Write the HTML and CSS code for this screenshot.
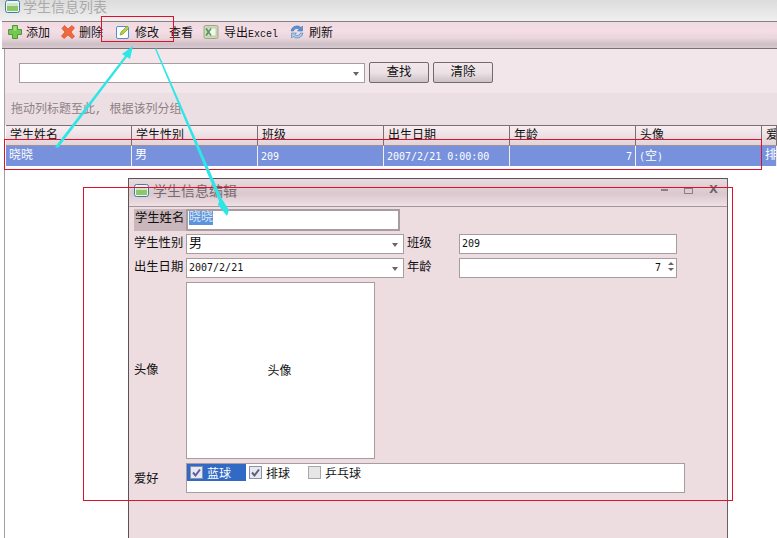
FILE: index.html
```html
<!DOCTYPE html>
<html lang="zh-CN">
<head>
  <meta charset="UTF-8" />
  <title>学生信息列表</title>
  <link rel="stylesheet" href="styles.css">
</head>
<body>
<div class="page">
  <div class="main-title">
    <svg class="win-icon" width="15" height="13" viewBox="0 0 15 13"><rect x="0.5" y="0.5" width="14" height="12" rx="2" fill="#eef3f8" stroke="#3d7f9c"/><rect x="2" y="3" width="11" height="8" fill="#8cc86a"/><rect x="2" y="3" width="11" height="3" fill="#cfe6c0"/></svg>
    <span>学生信息列表</span>
  </div>

  <div class="toolbar">
    <div class="tool">
      <svg width="16" height="16" viewBox="0 0 16 16"><path d="M5.500 1.500h5v4h4v5h-4v4h-5v-4h-4v-5h4z" fill="#74c850" stroke="#4c9a34"/><path d="M6.500 6.500v-4h3v4" fill="#a4e07f"/></svg>
      <span>添加</span>
    </div>
    <div class="tool">
      <svg width="16" height="16" viewBox="0 0 16 16"><path d="M2 4.500l2.500-3L8 5l4-3.500 2.500 2.500L11 8l3.500 4.500-2.500 2L8 11l-4 3.500-2.500-2.500L5 8z" fill="#ee6a3c" stroke="#d8492a" stroke-width=".7"/></svg>
      <span>删除</span>
    </div>
    <div class="tool tool-edit">
      <svg width="16" height="16" viewBox="0 0 16 16"><rect x="1.500" y="2.500" width="12" height="12" rx="1.500" fill="#fff" stroke="#4d8fd0"/><path d="M5 11l1-3 6-6 2 2-6 6z" fill="#b8cf4a" stroke="#7d9a30" stroke-width=".7"/></svg>
      <span>修改</span>
    </div>
    <div class="tool"><span>查看</span></div>
    <div class="tool tool-excel">
      <svg width="16" height="16" viewBox="0 0 16 16"><rect x="1" y="1.500" width="14" height="13" rx="1.500" fill="#cfd8b8" stroke="#9aa888"/><rect x="5" y="4" width="8" height="8" fill="#f2f5ea" stroke="#a8b898" stroke-width=".6"/><path d="M3 4.500l5 7M8 4.500l-5 7" stroke="#4c9a58" stroke-width="1.500"/></svg>
      <span>导出<span class="excel">Excel</span></span>
    </div>
    <div class="tool tool-refresh">
      <svg width="16" height="16" viewBox="0 0 16 16"><path d="M2 7a6 6 0 0 1 10-3.500l1.500-1.500v5h-5l1.700-1.700A3.500 3.500 0 0 0 4.500 7z" fill="#5b93d6" stroke="#39689f" stroke-width=".5"/><path d="M14 9a6 6 0 0 1-10 3.500L2.500 14V9h5l-1.700 1.700A3.500 3.500 0 0 0 11.500 9z" fill="#a8cbee" stroke="#39689f" stroke-width=".5"/></svg>
      <span>刷新</span>
    </div>
  </div>

  <div class="list-panel">
    <div class="search-row">
      <div class="combo search-combo"><span class="caret"></span></div>
      <div class="btn">查找</div>
      <div class="btn">清除</div>
    </div>
    <div class="group-bar">拖动列标题至此, 根据该列分组</div>
    <div class="grid-row grid-head">
      <div>学生姓名</div>
      <div>学生性别</div>
      <div>班级</div>
      <div>出生日期</div>
      <div>年龄</div>
      <div>头像</div>
      <div>爱好</div>
    </div>
    <div class="grid-row grid-data">
      <div>晓晓</div>
      <div>男</div>
      <div class="latin">209</div>
      <div class="latin">2007/2/21 0:00:00</div>
      <div class="latin num">7</div>
      <div><span class="latin">(</span>空<span class="latin">)</span></div>
      <div>排球</div>
    </div>
  </div>

  <div class="dialog">
    <div class="dialog-title">
      <svg class="win-icon" width="15" height="13" viewBox="0 0 15 13"><rect x="0.5" y="0.5" width="14" height="12" rx="2" fill="#eef3f8" stroke="#3d7f9c"/><rect x="2" y="3" width="11" height="8" fill="#8cc86a"/><rect x="2" y="3" width="11" height="3" fill="#cfe6c0"/></svg>
      <span class="dialog-name">学生信息编辑</span>
      <div class="win-btns">
        <i class="win-min"></i>
        <i class="win-max"></i>
        <i class="win-close">x</i>
      </div>
    </div>
    <div class="form">
      <label class="lbl lbl-active">学生姓名</label>
      <div class="field name-field"><span class="selected">晓晓</span></div>
      <label class="lbl">学生性别</label>
      <div class="combo cjk">男<span class="caret"></span></div>
      <label class="lbl lbl-side">班级</label>
      <div class="field latin">209</div>
      <label class="lbl">出生日期</label>
      <div class="combo latin">2007/2/21<span class="caret"></span></div>
      <label class="lbl lbl-side">年龄</label>
      <div class="field spin latin">7<span class="spin-arrows"><b></b><b></b></span></div>
      <label class="lbl">头像</label>
      <div class="avatar">头像</div>
      <label class="lbl lbl-hobby">爱好</label>
      <div class="checks">
        <div class="check check-on">
          <svg width="13" height="13" viewBox="0 0 13 13"><rect x=".5" y=".5" width="12" height="12" fill="#e8e8f0" stroke="#8a93a8"/><path d="M3 6.500l2.500 3L10 3.500" fill="none" stroke="#5a5fa8" stroke-width="2"/></svg>
          <span>蓝球</span>
        </div>
        <div class="check check-plain">
          <svg width="13" height="13" viewBox="0 0 13 13"><rect x=".5" y=".5" width="12" height="12" fill="#e8e8f0" stroke="#8a93a8"/><path d="M3 6.500l2.500 3L10 3.500" fill="none" stroke="#5a6078" stroke-width="2"/></svg>
          <span>排球</span>
        </div>
        <div class="check check-plain">
          <svg width="13" height="13" viewBox="0 0 13 13"><rect x=".5" y=".5" width="12" height="12" fill="#e6e6e6" stroke="#a8a8a8"/></svg>
          <span>乒乓球</span>
        </div>
      </div>
    </div>
  </div>

  <!-- 标注 -->
  <svg class="marks" width="777" height="538" viewBox="0 0 777 538">
    <g fill="none" stroke="#e0102c" shape-rendering="crispEdges">
      <rect x="101.500" y="16.500" width="72" height="25"/>
      <rect x="4.500" y="139.500" width="757" height="30"/>
      <rect x="83.500" y="187.500" width="649" height="313"/>
    </g>
    <path d="M55 147L125 56l-3-2 11-8-3 13-3-2L58 148z" fill="#2ee6e6"/>
    <path d="M155 49L219 201l-1 4 9 11 2-6-7-11L156 48z" fill="#2ee6e6"/>
  </svg>
</div>
</body>
</html>
```

FILE: styles.css
```css
* { box-sizing: border-box; }
html, body { margin: 0; background: #fff; }
body {
  font-family: "Liberation Mono", "Noto Sans CJK SC", monospace;
  font-size: 12px;
  color: #111;
}
.page {
  position: relative;
  width: 777px;
  height: 538px;
  overflow: hidden;
  display: flex;
  flex-direction: column;
}
.latin { font-family: "DejaVu Sans Mono", "Noto Sans CJK SC", monospace; font-size: 10px; }
.excel { font-size: 10px; }
.win-icon { flex: none; }

.main-title {
  height: 21px;
  padding: 0 0 6px 5px;
  display: flex;
  align-items: flex-end;
  gap: 3px;
  background: linear-gradient(to bottom, #dcdcdc, #efefef);
  color: #aaa;
  font-size: 14px;
  line-height: 14px;
}
.main-title .win-icon { margin-bottom: 2px; }

.toolbar {
  height: 28px;
  margin-left: 2px;
  padding: 0 0 6px 5px;
  display: flex;
  align-items: center;
  border-top: 1px solid #8a8083;
  border-bottom: 1px solid #7c6f74;
  background: linear-gradient(to bottom, #efdbe2 0%, #f5dde6 35%, #ead6dd 62%, #cdbfc5 85%, #d8cad0 100%);
}
.tool {
  display: flex;
  align-items: center;
  gap: 3px;
  margin-right: 10px;
  white-space: nowrap;
}
.tool-edit { margin-left: 2px; gap: 4px; }
.tool-excel { gap: 5px; margin-right: 11px; }
.tool-refresh { gap: 4px; }

.list-panel {
  flex: 1;
  margin-left: 4px;
  border-left: 1px solid #a89ea2;
  background: #fff;
}
.search-row {
  height: 44px;
  padding: 14px 0 0 14px;
  display: flex;
  align-items: flex-start;
  gap: 4px;
  background: #f3e6eb;
}
.combo, .field {
  position: relative;
  height: 20px;
  padding-left: 2px;
  background: #fff;
  border: 1px solid #a79da1;
  line-height: 17px;
}
.search-combo { width: 346px; }
.caret {
  position: absolute;
  right: 5px;
  top: 8px;
  border: 3px solid transparent;
  border-top: 4px solid #666;
  border-bottom: 0;
}
.btn {
  width: 60px;
  height: 21px;
  margin-top: -1px;
  text-align: center;
  line-height: 20px;
  font-size: 12.500px;
  border: 1px solid #736a6e;
  border-radius: 2px;
  background: linear-gradient(to bottom, #f2e8ec 0%, #ece2e6 50%, #cbc2c6 100%);
}
.group-bar {
  height: 32px;
  padding: 9px 0 0 6px;
  background: #ebdfe3;
  color: #8e8186;
  line-height: 16px;
}
.grid-row {
  display: grid;
  grid-template-columns: repeat(6, 126px) 1fr;
  margin-left: 1px;
}
.grid-row > div {
  padding-left: 4px;
  border-right: 1px solid #f4eef0;
  white-space: nowrap;
  overflow: hidden;
}
.grid-head {
  height: 21px;
  background: linear-gradient(to bottom, #f7eef1, #e3d3d9);
  border-top: 1px solid #7c6f74;
  border-bottom: 1px solid #a09297;
  line-height: 19px;
}
.grid-head > div { border-right: 1px solid #7c6f74; padding-top: 1px; }
.grid-data {
  height: 20px;
  background: #7891dc;
  color: #fff;
  line-height: 19px;
}
.grid-data > div { padding-left: 3px; padding-top: 1px; }
.grid-data .num { text-align: right; padding-right: 3px; }

/* 编辑窗口 */
.dialog {
  position: absolute;
  left: 128px;
  top: 178px;
  width: 600px;
  height: 362px;
  border: 1px solid #5d5357;
  border-right-color: #6a6064;
  background: #eddde1;
}
.dialog-title {
  height: 28px;
  padding: 0 9px 5px 5px;
  display: flex;
  align-items: center;
  gap: 4px;
  background: linear-gradient(to bottom, #e8dade, #dbc8ce 55%, #eee0e4);
  border-bottom: 1px solid #a4979c;
  color: #77696e;
  font-size: 14px;
}
.dialog-name { flex: 1; }
.win-btns {
  display: flex;
  align-items: center;
  gap: 16px;
}
.win-btns i { display: block; font-style: normal; }
.win-min { width: 7px; height: 2px; background: #8a8084; }
.win-max { width: 9px; height: 7px; border: 1px solid #8a8084; border-top-width: 2px; }
.win-close { color: #6d6367; font-weight: bold; font-size: 15px; line-height: 10px; }

.form {
  padding: 3px 0 0 5px;
  display: grid;
  grid-template-columns: 52px 218px 55px 218px;
  grid-template-rows: 20px 20px 20px 177px 30px;
  row-gap: 4px;
  align-items: center;
}
.lbl { font-size: 12.300px; line-height: 20px; white-space: nowrap; }
.lbl-active { background: #c9b7bc; padding-left: 1px; height: 22px; }
.lbl-side { padding-left: 3px; }
.lbl-hobby { margin-top: 3px; }
.name-field {
  grid-column: 2 / 5;
  width: 214px;
  height: 22px;
  border: 2px solid #a99ca1;
  line-height: 15px;
  padding-left: 1px;
}
.selected { background: #5b93dd; color: #dde9f8; }
.cjk { font-size: 13px; }
.spin { text-align: right; padding-right: 15px; }
.spin-arrows {
  position: absolute;
  right: 2px;
  top: 3px;
  display: flex;
  flex-direction: column;
  gap: 3px;
}
.spin-arrows b {
  display: block;
  border: 3px solid transparent;
  border-top: 0;
  border-bottom: 3px solid #666;
}
.spin-arrows b + b { border-bottom: 0; border-top: 3px solid #666; }
.avatar {
  grid-column: 2 / 5;
  width: 189px;
  height: 177px;
  padding: 0 2px 2px 0;
  display: flex;
  align-items: center;
  justify-content: center;
  background: #fff;
  border: 1px solid #a79da1;
}
.checks {
  grid-column: 2 / 5;
  width: 499px;
  height: 30px;
  display: flex;
  align-items: flex-start;
  background: #fff;
  border: 1px solid #a79da1;
}
.check {
  display: flex;
  align-items: center;
  gap: 4px;
  height: 17px;
  white-space: nowrap;
}
.check-on {
  width: 59px;
  padding-left: 3px;
  background: #316ac5;
  color: #fff;
}
.check-plain { margin-left: 3px; width: 56px; }
.marks {
  position: absolute;
  left: 0;
  top: 0;
  pointer-events: none;
}
```
